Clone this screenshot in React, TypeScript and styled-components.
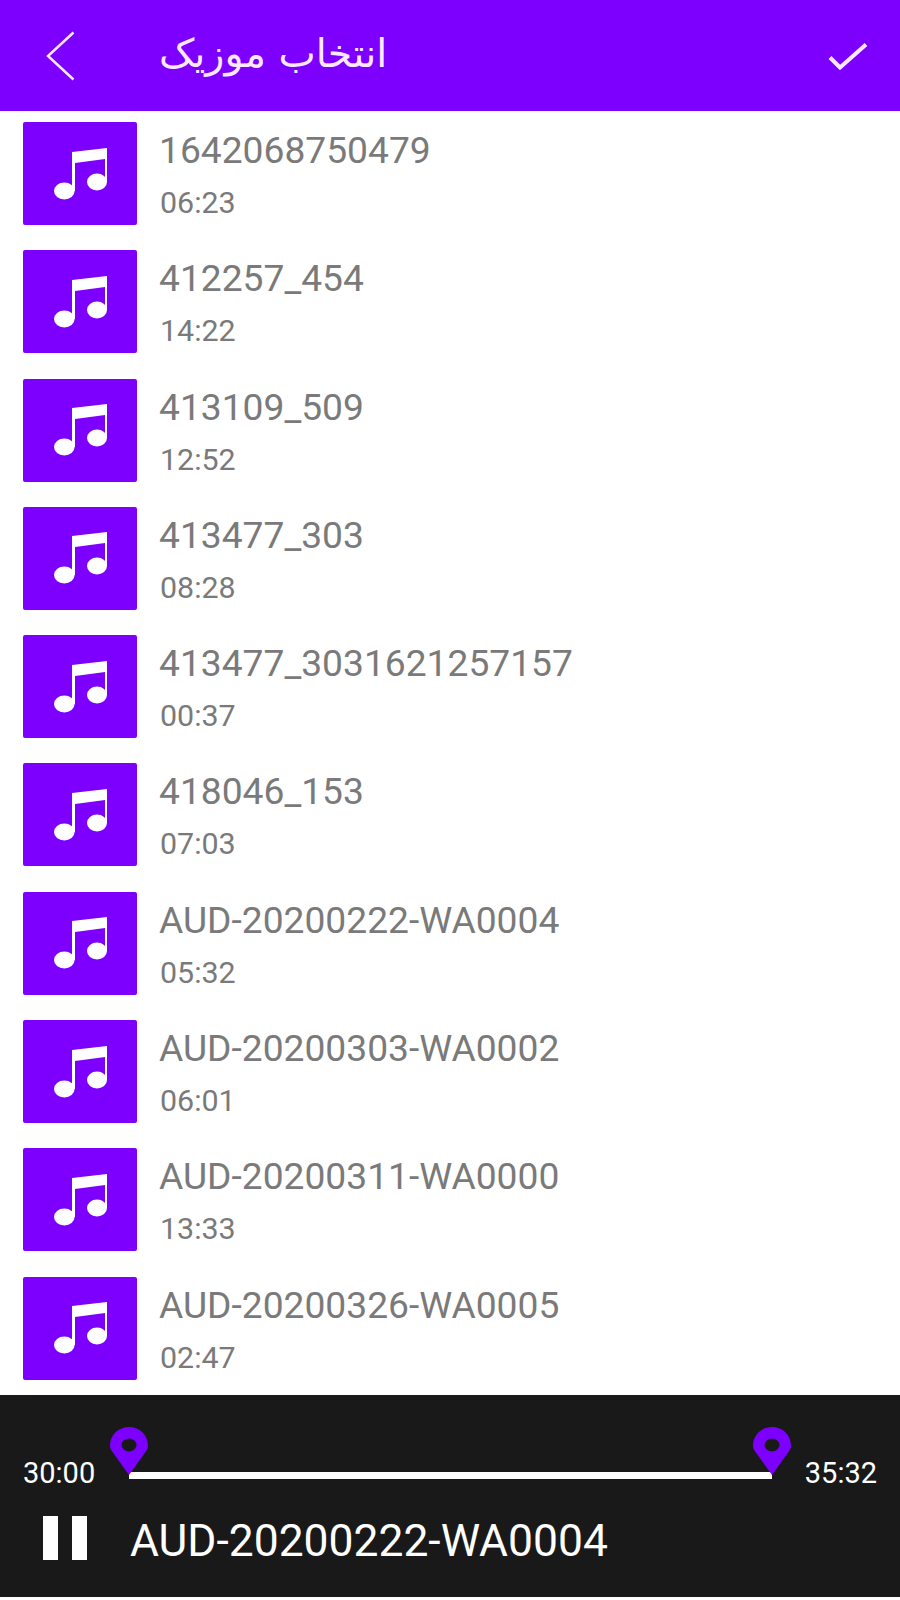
import styled, { createGlobalStyle } from 'styled-components';

const tracks = [
  { name: '1642068750479', time: '06:23' },
  { name: '412257_454', time: '14:22' },
  { name: '413109_509', time: '12:52' },
  { name: '413477_303', time: '08:28' },
  { name: '413477_3031621257157', time: '00:37' },
  { name: '418046_153', time: '07:03' },
  { name: 'AUD-20200222-WA0004', time: '05:32' },
  { name: 'AUD-20200303-WA0002', time: '06:01' },
  { name: 'AUD-20200311-WA0000', time: '13:33' },
  { name: 'AUD-20200326-WA0005', time: '02:47' },
];

const GlobalStyle = createGlobalStyle`
  html, body {
    margin: 0;
    padding: 0;
    background: #fff;
  }
  * {
    box-sizing: border-box;
  }
`;

const Page = styled.div`
  width: 900px;
  height: 1600px;
  display: flex;
  flex-direction: column;
  font-family: Roboto, "Liberation Sans", sans-serif;
  overflow: hidden;
`;

const Header = styled.header`
  height: 111px;
  flex: none;
  background: #7d00ff;
  display: flex;
  align-items: center;
  padding: 0 32px 0 46px;
  color: #fff;
`;

const Title = styled.div`
  flex: 1;
  margin-left: 83px;
  margin-top: -5px;
  font-family: "DejaVu Sans", sans-serif;
  font-size: 39.5px;
  color: #fbeaff;
`;

const TitleText = styled.span`
  display: inline-block;
  direction: rtl;
`;

const List = styled.div`
  flex: 1;
  min-height: 0;
  overflow: hidden;
  padding-top: 11px;
`;

const Row = styled.div`
  height: 128.3px;
  display: flex;
  padding-left: 23px;
`;

const Thumb = styled.div`
  width: 114px;
  height: 103px;
  flex: none;
  background: #7d00ff;
  border-radius: 2px;
  display: flex;
  align-items: center;
  justify-content: center;
`;

const Info = styled.div`
  margin-left: 23px;
  color: #7a7a7a;
`;

const Name = styled.div`
  font-size: 37.2px;
  line-height: 43px;
  margin-top: 7px;
  margin-left: -1px;
`;

const Time = styled.div`
  font-size: 30.4px;
  line-height: 35px;
  margin-top: 13px;
`;

const Player = styled.footer`
  height: 202px;
  flex: none;
  background: #191919;
  color: #fff;
  margin-bottom: 3px;
  display: flex;
  flex-direction: column;
`;

const RangeRow = styled.div`
  height: 119px;
  display: flex;
  align-items: flex-end;
  padding: 0 23px 23px 23px;
  font-size: 29px;
  line-height: 35px;
`;

const Track = styled.div`
  position: relative;
  flex: 1;
  height: 7px;
  margin: 0 33px 12px 34px;
  background: #fff;
`;

const Pin = styled.svg<{ $end?: boolean }>`
  position: absolute;
  bottom: 4px;
  ${({ $end }) => ($end ? 'right: -20px;' : 'left: -20px;')}
`;

const NowPlaying = styled.div`
  display: flex;
  align-items: center;
  height: 44px;
  margin-top: 2px;
  padding-left: 43px;
`;

const Pause = styled.div`
  display: flex;
  gap: 14px;
  margin-right: 43px;
`;

const PauseBar = styled.div`
  width: 15px;
  height: 44px;
  background: #fff;
`;

const NowTitle = styled.div`
  font-size: 44.4px;
  line-height: 48px;
  margin-top: 5px;
`;

function Note() {
  return (
    <svg width="53" height="52" viewBox="0 0 53 52" fill="#fff">
      <ellipse cx="10.3" cy="43" rx="10.300" ry="8.500" />
      <ellipse cx="43" cy="34" rx="10" ry="8.500" />
      <path d="M18 43V4L53 0V34H51V11L21 15V43Z" />
    </svg>
  );
}

function MapPin({ end }: { end?: boolean }) {
  return (
    <Pin $end={end} width="40" height="48" viewBox="0 0 40 48">
      <path
        fillRule="evenodd"
        fill="#7d00ff"
        d="M20 48L5 27C2.500 24 1 21.500 1 18.500C1 8 9.500 0 20 0S39 8 39 18.500C39 21.500 37.500 24 35 27ZM12.500 18a7.500 6.500 0 1 0 15 0a7.500 6.500 0 1 0 -15 0Z"
      />
    </Pin>
  );
}

export default function App() {
  return (
    <Page>
      <GlobalStyle />
      <Header>
        <svg width="30" height="50" viewBox="0 0 30 50" fill="none" stroke="#fbeaff" strokeWidth="2.5">
          <path d="M27.500 1.500L2 25L27.500 48.500" />
        </svg>
        <Title>
          <TitleText>انتخاب موزیک</TitleText>
        </Title>
        <svg width="40" height="28" viewBox="0 0 40 28" fill="none" stroke="#fbeaff" strokeWidth="4">
          <path d="M2 15.500L12 25.500L38 2.500" />
        </svg>
      </Header>
      <List>
        {tracks.map((t) => (
          <Row key={t.name}>
            <Thumb>
              <Note />
            </Thumb>
            <Info>
              <Name>{t.name}</Name>
              <Time>{t.time}</Time>
            </Info>
          </Row>
        ))}
      </List>
      <Player>
        <RangeRow>
          <span>30:00</span>
          <Track>
            <MapPin />
            <MapPin end />
          </Track>
          <span>35:32</span>
        </RangeRow>
        <NowPlaying>
          <Pause>
            <PauseBar />
            <PauseBar />
          </Pause>
          <NowTitle>AUD-20200222-WA0004</NowTitle>
        </NowPlaying>
      </Player>
    </Page>
  );
}
